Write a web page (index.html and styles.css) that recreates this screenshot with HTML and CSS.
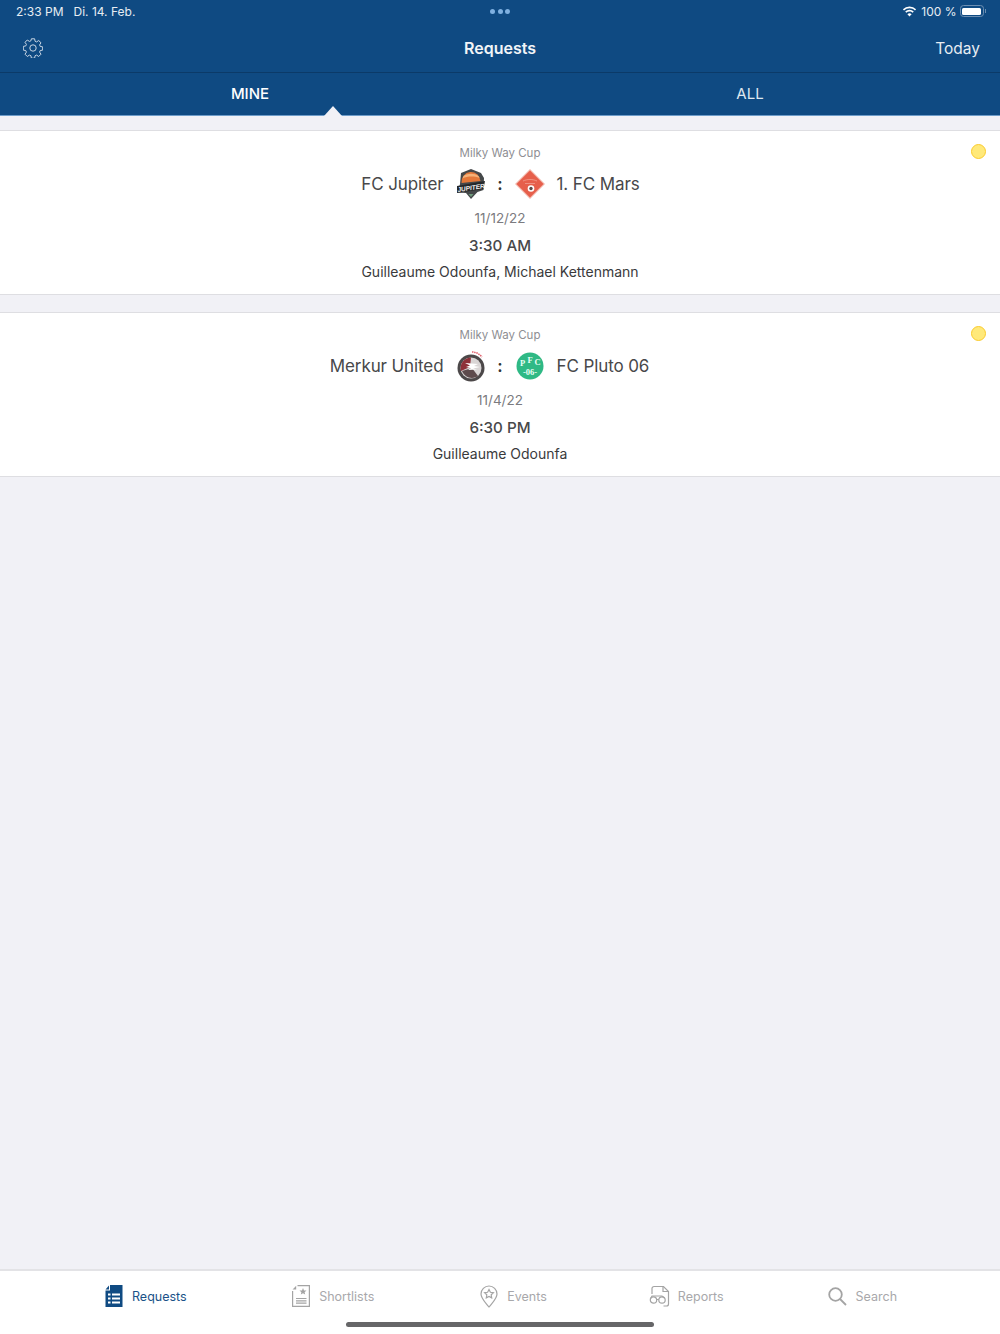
FILE: index.html
```html
<!DOCTYPE html>
<html lang="en">
<head>
<meta charset="utf-8">
<title>Requests</title>
<link rel="stylesheet" href="styles.css">
</head>
<body>
<div class="app">
  <header class="header">
    <div class="status">
      <div class="status-left"><span>2:33 PM</span><span>Di. 14. Feb.</span></div>
      <div class="dots"><i></i><i></i><i></i></div>
      <div class="status-right">
        <svg class="wifi" width="15" height="11" viewBox="0 0 15 11"><path d="M7.5 2.2c2.1 0 4 .8 5.5 2.2l1.1-1.2A9.7 9.7 0 0 0 7.5.5 9.7 9.7 0 0 0 .9 3.2L2 4.4a8 8 0 0 1 5.5-2.2z" fill="#fff"/><path d="M7.5 5.4c1.2 0 2.3.5 3.2 1.3l1.1-1.2a6.3 6.3 0 0 0-8.6 0l1.1 1.2c.9-.8 2-1.3 3.2-1.3z" fill="#fff"/><path d="M7.5 10.6l2.1-2.3a3 3 0 0 0-4.2 0z" fill="#fff"/></svg>
        <span>100 %</span>
        <span class="battery"><span class="battery-fill"></span></span><span class="battery-cap"></span>
      </div>
    </div>
    <nav class="nav">
      <svg class="gear" width="20" height="20" viewBox="0 0 20 20" fill="none" stroke="#c9d6e4" stroke-width="1" stroke-linejoin="round"><path d="M8.4.8h3.2l.5 2.500 1.500.6 2.100-1.400 2.300 2.300-1.400 2.100.6 1.500 2.500.5v3.200l-2.500.5-.6 1.500 1.400 2.100-2.300 2.300-2.100-1.400-1.500.6-.5 2.500H8.400l-.5-2.500-1.500-.6-2.100 1.400-2.300-2.300 1.400-2.100-.6-1.500-2.500-.5V8.400l2.500-.5.6-1.500-1.400-2.100 2.300-2.300 2.100 1.400 1.500-.6z"/><circle cx="10" cy="10" r="3.200"/></svg>
      <h1 class="nav-title">Requests</h1>
      <span class="nav-action">Today</span>
    </nav>
    <div class="tabs">
      <div class="tab tab-active">MINE</div>
      <div class="tab">ALL</div>
      <span class="tab-caret"></span>
    </div>
  </header>

  <main class="list">
    <article class="card">
      <span class="status-dot"></span>
      <div class="cup">Milky Way Cup</div>
      <div class="match">
        <div class="team team-home">FC Jupiter</div>
        <svg class="crest" width="30" height="32" viewBox="0 0 30 32"><path d="M5 5L15 1l10 4 3 5-.5 12-6 2L15 31l-5-6-8-.5L4 16z" fill="#45484a"/><path d="M5.500 15a9.500 10 0 0 1 19-2z" fill="#e4783a"/><path d="M7.500 8c4-3 11-3 15 0l1 2c-5-2-12-2-17 .5z" fill="#f4b27a"/><path d="M1 18l28-5-1.500 8L1 25z" fill="#26282a"/><text x="15" y="22" class="crest-text" transform="rotate(-8 15 20)">JUPITER</text><path d="M12.500 26l2.500 3 2.500-3z" fill="#6f9a7c"/></svg>
        <span class="colon">:</span>
        <svg class="crest" width="30" height="32" viewBox="0 0 30 32"><path d="M15 1l15 15-15 15L0 16z" fill="#f3b7ab"/><path d="M15 2.500L28.500 16 15 29.500 1.500 16z" fill="#e65f4b"/><path d="M8 13c4-2 10-2 14 0M10 15.500h10" stroke="#f5b3a6" stroke-width=".6" fill="none"/><circle cx="16" cy="20.500" r="3.300" fill="#fff"/><circle cx="16" cy="20.500" r="1.700" fill="#5a4a48"/></svg>
        <div class="team team-away">1. FC Mars</div>
      </div>
      <div class="date">11/12/22</div>
      <div class="time">3:30 AM</div>
      <div class="people">Guilleaume Odounfa, Michael Kettenmann</div>
    </article>

    <article class="card">
      <span class="status-dot"></span>
      <div class="cup">Milky Way Cup</div>
      <div class="match">
        <div class="team team-home">Merkur United</div>
        <svg class="crest" width="30" height="32" viewBox="0 0 30 32"><path d="M16 2a13 13 0 0 1 10 5" stroke="#e0606c" stroke-width="1.500" fill="none" stroke-dasharray="1.500 .7"/><circle cx="15" cy="18" r="13.500" fill="#4c4849"/><circle cx="15" cy="18" r="10.500" fill="#d9d5d5"/><path d="M15 7.500a10.500 10.500 0 0 0-10 13.500l9-4z" fill="#8e3038"/><path d="M6 21a10.500 10.500 0 0 0 16 5l-6-8z" fill="#5d4a4c"/><path d="M9 13l13 1-4 2 6 1-7 1.500 4 1-9 .5 3-2-5-1 4-1.500z" fill="#fff"/></svg>
        <span class="colon">:</span>
        <svg class="crest" width="30" height="32" viewBox="0 0 30 32"><circle cx="15" cy="16" r="13.500" fill="#2fb985"/><text x="7.500" y="16" class="pfc">P</text><text x="15" y="12.500" class="pfc">F</text><text x="22.500" y="15" class="pfc">C</text><text x="15" y="24.500" class="pfc">-06-</text></svg>
        <div class="team team-away">FC Pluto 06</div>
      </div>
      <div class="date">11/4/22</div>
      <div class="time">6:30 PM</div>
      <div class="people">Guilleaume Odounfa</div>
    </article>
  </main>

  <footer class="tabbar">
    <div class="tabbar-item tabbar-active item-requests">
      <svg width="18" height="22" viewBox="0 0 18 22"><path d="M5 0H17.500v22H.5V5.500H5z" fill="#0f4a82"/><path d="M.5 4.500L4 .5v4z" fill="#0f4a82"/><g fill="#fff"><rect x="3" y="8.500" width="2.500" height="2"/><rect x="7" y="8.500" width="8" height="2"/><rect x="3" y="12.500" width="2.500" height="2"/><rect x="7" y="12.500" width="8" height="2"/><rect x="3" y="16.500" width="2.500" height="2"/><rect x="7" y="16.500" width="8" height="2"/></g></svg>
      <span>Requests</span>
    </div>
    <div class="tabbar-item item-shortlists">
      <svg width="18" height="22" viewBox="0 0 18 22" fill="none" stroke="#a4a4a4" stroke-width="1.200"><path d="M5.500.6h11.900v20.800H.6V6"/><path d="M.6 4.500L4.200.8v3.700z" fill="#a4a4a4" stroke="none"/><path d="M4 13.500h10.500M4 15.800h10.500M4 18.100h10.500"/><path d="M11 3l1 2.400 2.500.2-1.900 1.600.6 2.400-2.200-1.300-2.200 1.300.6-2.400-1.900-1.600 2.500-.2z" fill="#a4a4a4" stroke="none"/></svg>
      <span>Shortlists</span>
    </div>
    <div class="tabbar-item item-events">
      <svg width="18" height="23" viewBox="0 0 18 23" fill="none" stroke="#a4a4a4" stroke-width="1.200"><path d="M9 22C5 17 1 13.500 1 9a8 8 0 0 1 16 0c0 4.500-4 8-8 13z"/><path d="M9 4.500l1.400 2.800 3 .4-2.200 2.100.5 3L9 11.400 6.300 12.800l.5-3-2.200-2.100 3-.4z"/></svg>
      <span>Events</span>
    </div>
    <div class="tabbar-item item-reports">
      <svg width="21" height="22" viewBox="0 0 21 22" fill="none" stroke="#a4a4a4" stroke-width="1.200"><path d="M3 9V3.500A2 2 0 0 1 5 1.500h9.500l5 5V19a2 2 0 0 1-2 2h-3"/><path d="M14 1.500v5h5.500"/><circle cx="4.500" cy="15" r="3.200"/><circle cx="13" cy="15" r="3.200"/><path d="M7.700 14.500h2.100M1.300 14l1.700-3h10l2.500 2"/></svg>
      <span>Reports</span>
    </div>
    <div class="tabbar-item item-search">
      <svg width="19" height="19" viewBox="0 0 19 19" fill="none" stroke="#a4a4a4" stroke-width="1.800"><circle cx="7.500" cy="7.500" r="6.300"/><path d="M12 12l6 6"/></svg>
      <span>Search</span>
    </div>
    <span class="home-indicator"></span>
  </footer>
</div>
</body>
</html>
```

FILE: styles.css
```css
* { box-sizing: border-box; }
html, body { margin: 0; padding: 0; }
body {
  width: 1000px;
  height: 1334px;
  overflow: hidden;
  font-family: Inter, "Liberation Sans", sans-serif;
  background: #f1f1f6;
}
.app {
  display: flex;
  flex-direction: column;
  height: 1334px;
}
.header {
  flex: none;
  background: #0f4a82;
  color: #fff;
}
.status {
  height: 24px;
  padding: 0 14px 2px 16px;
  display: grid;
  grid-template-columns: 1fr auto 1fr;
  align-items: center;
  font-size: 12px;
}
.status-left {
  display: flex;
  gap: 10px;
  color: #e7edf3;
}
.dots {
  display: flex;
  gap: 2.500px;
  margin-left: -2px;
}
.dots i {
  width: 5px;
  height: 5px;
  border-radius: 50%;
  background: #7fb0e0;
}
.status-right {
  display: flex;
  justify-content: flex-end;
  align-items: center;
  gap: 3px;
  color: #e7edf3;
}
.wifi { margin-right: 1px; }
.battery {
  width: 24px;
  height: 12px;
  border: 1px solid #6d8fb2;
  border-radius: 3.500px;
  padding: 1.500px;
  display: flex;
}
.battery-fill {
  flex: 1;
  background: #fff;
  border-radius: 1.500px;
}
.battery-cap {
  width: 1.500px;
  height: 4px;
  background: #6d8fb2;
  margin-left: -2px;
}
.nav {
  height: 49px;
  padding: 0 20px 1px 23px;
  display: grid;
  grid-template-columns: 180px 1fr 180px;
  align-items: center;
  border-bottom: 1px solid #0b3a68;
}
.nav-title {
  margin: 0 0 0 -3px;
  text-align: center;
  font-size: 16px;
  font-weight: 600;
  color: #f2f5f8;
}
.nav-action {
  justify-self: end;
  margin-top: 1px;
  font-size: 15.500px;
  color: #e7edf3;
}
.tabs {
  position: relative;
  height: 43px;
  display: grid;
  grid-template-columns: 1fr 1fr;
  border-bottom: 1px solid #6d9cc9;
}
.tab {
  display: flex;
  align-items: center;
  justify-content: center;
  padding-bottom: 1px;
  font-size: 15px;
  color: #dfe7ef;
}
.tab-active {
  font-weight: 500;
  color: #fff;
}
.tab-caret {
  position: absolute;
  left: 324px;
  bottom: -1px;
  border-left: 9.500px solid transparent;
  border-right: 9.500px solid transparent;
  border-bottom: 10px solid #f1f1f6;
}
.list {
  flex: 1;
  padding-top: 14px;
  display: flex;
  flex-direction: column;
  gap: 17px;
}
.card {
  position: relative;
  height: 165px;
  padding-top: 14px;
  background: #fff;
  border-top: 1px solid #dedee2;
  border-bottom: 1px solid #dedee2;
  text-align: center;
}
.status-dot {
  position: absolute;
  top: 13px;
  right: 14px;
  width: 15px;
  height: 15px;
  border-radius: 50%;
  background: #ffe97a;
  border: 1.500px solid #fbcb2c;
}
.cup {
  height: 16px;
  line-height: 16px;
  font-size: 11.500px;
  color: #8e8e93;
}
.match {
  margin-top: 3px;
  height: 40px;
  display: grid;
  grid-template-columns: 1fr 30px 29px 30px 1fr;
  align-items: center;
  font-size: 17px;
  letter-spacing: -0.1px;
  color: #48484a;
}
.team-home { text-align: right; padding-right: 12px; }
.team-away { text-align: left; padding-left: 12px; }
.colon { font-weight: 600; color: #333; }
.crest { display: block; }
.crest-text {
  font-family: "Liberation Sans", sans-serif;
  font-size: 6.500px;
  font-weight: 700;
  font-style: italic;
  fill: #f2f2f2;
  text-anchor: middle;
  letter-spacing: 0;
}
.pfc {
  font-family: "Liberation Serif", serif;
  font-size: 8.500px;
  font-weight: 700;
  fill: #eafff6;
  text-anchor: middle;
  letter-spacing: 0;
}
.date {
  margin-top: 6px;
  height: 17px;
  line-height: 17px;
  font-size: 13.500px;
  color: #7b7b80;
}
.time {
  margin-top: 10px;
  height: 17px;
  line-height: 17px;
  font-size: 15.200px;
  font-weight: 500;
  color: #48484a;
}
.people {
  margin-top: 9px;
  height: 18px;
  line-height: 18px;
  font-size: 14px;
  color: #3a3a3c;
}
.tabbar {
  position: relative;
  flex: none;
  height: 65px;
  background: #fff;
  border-top: 2px solid #e3e3e6;
  padding: 14px 0 0;
  display: flex;
}
.tabbar-item {
  display: flex;
  align-items: center;
  height: 22px;
  gap: 10px;
  font-size: 12.500px;
  color: #a8a8ab;
}
.tabbar-active { color: #1b5288; }
.item-requests { margin-left: 105px; gap: 9px; }
.item-shortlists { margin-left: 105px; gap: 9.500px; }
.item-events { margin-left: 105.500px; gap: 9.500px; }
.item-reports { margin-left: 102px; gap: 8px; }
.item-search { margin-left: 104px; gap: 9px; }
.home-indicator {
  position: absolute;
  left: 346px;
  bottom: 7px;
  width: 308px;
  height: 5px;
  border-radius: 3px;
  background: #666668;
}
```
